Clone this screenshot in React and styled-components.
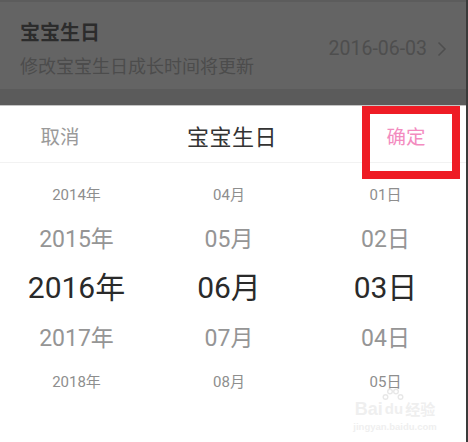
import React from 'react';
import styled, { createGlobalStyle } from 'styled-components';

const GlobalStyle = createGlobalStyle`
  html, body {
    margin: 0;
    padding: 0;
    background: #ffffff;
  }
  body {
    font-family: Roboto, "Noto Sans CJK SC", sans-serif;
  }
`;

const Screen = styled.div`
  position: relative;
  width: 466px;
  height: 442px;
  border-right: 2px solid #3a3a3a;
  overflow: hidden;
  background: #ffffff;
`;

const Overlay = styled.div`
  background: #5b5b5b;
  border-bottom: 1px solid #c4c4c4;
`;

const Item = styled.div`
  height: 89px;
  display: flex;
  align-items: center;
  justify-content: space-between;
  padding: 0 19px 0 20px;
  background: #646464;
  border-top: 2px solid #5c5c5c;
  box-sizing: border-box;
`;

const ItemText = styled.div`
  align-self: flex-start;
  display: flex;
  flex-direction: column;
  gap: 9px;
  padding-top: 18px;
`;

const ItemTitle = styled.div`
  font-size: 20px;
  font-weight: 700;
  color: #2c2c2c;
  line-height: 26px;
`;

const ItemSub = styled.div`
  font-size: 18px;
  color: #4c4c4c;
  line-height: 24px;
`;

const ItemValue = styled.div`
  display: flex;
  align-items: center;
  gap: 10px;
  font-size: 19.5px;
  color: #4e4e4e;
  margin-top: 6px;
`;

const Gap = styled.div`
  height: 16px;
`;

const Sheet = styled.div`
  background: #ffffff;
`;

const SheetHeader = styled.div`
  height: 56px;
  display: grid;
  grid-template-columns: 120px 1fr 120px;
  align-items: center;
  border-bottom: 1px solid #f2f2f2;
`;

const HeaderAction = styled.div`
  font-size: 19.5px;
  color: ${(p) => p.$color};
  text-align: center;
  margin-top: 2px;
`;

const SheetTitle = styled.div`
  font-size: 22px;
  color: #333333;
  text-align: center;
  letter-spacing: 0.5px;
  margin-top: 2px;
  margin-left: -2px;
`;

const Picker = styled.div`
  display: grid;
  grid-template-columns: 153px 152px 1fr;
  padding-top: 7px;
`;

const Column = styled.div`
  display: flex;
  flex-direction: column;
`;

const Cell = styled.div`
  height: ${(p) => p.$h}px;
  display: flex;
  align-items: center;
  justify-content: center;
  font-size: ${(p) => p.$size}px;
  font-weight: ${(p) => p.$weight};
  color: ${(p) => p.$color};
`;

const Highlight = styled.div`
  position: absolute;
  left: 362px;
  top: 106px;
  width: 98px;
  height: 73px;
  border: 8px solid #ee1c25;
  box-sizing: border-box;
`;

const Watermark = styled.div`
  position: absolute;
  left: 350px;
  top: 400px;
  width: 90px;
  display: flex;
  flex-direction: column;
  align-items: center;
  color: #efefef;
  font-family: "Liberation Sans", sans-serif;
`;

const MarkLine = styled.div`
  display: flex;
  align-items: center;
  font-size: 18px;
  font-weight: 700;
  line-height: 18px;
`;

const MarkDu = styled.span`
  position: relative;
  margin: 0 2px;
  font-size: 15px;
`;

const MarkCjk = styled.span`
  font-family: "Noto Sans CJK SC", sans-serif;
  font-size: 15px;
`;

const MarkSmall = styled.div`
  font-size: 9.5px;
  font-weight: 700;
  margin-top: 3px;
`;

const levels = [
  { h: 46, size: 15, weight: 400, color: '#8e8e8e' },
  { h: 42, size: 23, weight: 400, color: '#959595' },
  { h: 54, size: 30, weight: 400, color: '#2a2a2a' },
  { h: 48, size: 23, weight: 400, color: '#959595' },
  { h: 40, size: 15, weight: 400, color: '#8e8e8e' },
];

const columns = [
  ['2014年', '2015年', '2016年', '2017年', '2018年'],
  ['04月', '05月', '06月', '07月', '08月'],
  ['01日', '02日', '03日', '04日', '05日'],
];

const Chevron = () => (
  <svg width="10" height="16" viewBox="0 0 10 16">
    <path d="M1.5 1.5 L8 8 L1.5 14.5" fill="none" stroke="#4e4e4e" strokeWidth="1.5" />
  </svg>
);

const Paw = () => (
  <svg
    width="22"
    height="14"
    viewBox="0 0 22 14"
    style={{ position: 'absolute', left: -3, top: -12 }}
  >
    <g fill="none" stroke="#e8e8e8" strokeWidth="1.4">
      <circle cx="3.5" cy="9" r="2.3" />
      <circle cx="8" cy="3.5" r="2.3" />
      <circle cx="14" cy="3.5" r="2.3" />
      <circle cx="18.5" cy="9" r="2.3" />
    </g>
  </svg>
);

const App = () => {
  return (
    <Screen>
      <GlobalStyle />
      <Overlay>
        <Item>
          <ItemText>
            <ItemTitle>宝宝生日</ItemTitle>
            <ItemSub>修改宝宝生日成长时间将更新</ItemSub>
          </ItemText>
          <ItemValue>
            2016-06-03
            <Chevron />
          </ItemValue>
        </Item>
        <Gap />
      </Overlay>
      <Sheet>
        <SheetHeader>
          <HeaderAction $color="#9a9a9a">取消</HeaderAction>
          <SheetTitle>宝宝生日</SheetTitle>
          <HeaderAction $color="#f38cbf">确定</HeaderAction>
        </SheetHeader>
        <Picker>
          {columns.map((col, ci) => (
            <Column key={ci}>
              {col.map((label, i) => (
                <Cell
                  key={label}
                  $h={levels[i].h}
                  $size={levels[i].size}
                  $weight={levels[i].weight}
                  $color={levels[i].color}
                >
                  {label}
                </Cell>
              ))}
            </Column>
          ))}
        </Picker>
      </Sheet>
      <Highlight />
      <Watermark>
        <MarkLine>
          Bai
          <MarkDu>
            du
            <Paw />
          </MarkDu>
          <MarkCjk>经验</MarkCjk>
        </MarkLine>
        <MarkSmall>jingyan.baidu.com</MarkSmall>
      </Watermark>
    </Screen>
  );
};

export default App;
